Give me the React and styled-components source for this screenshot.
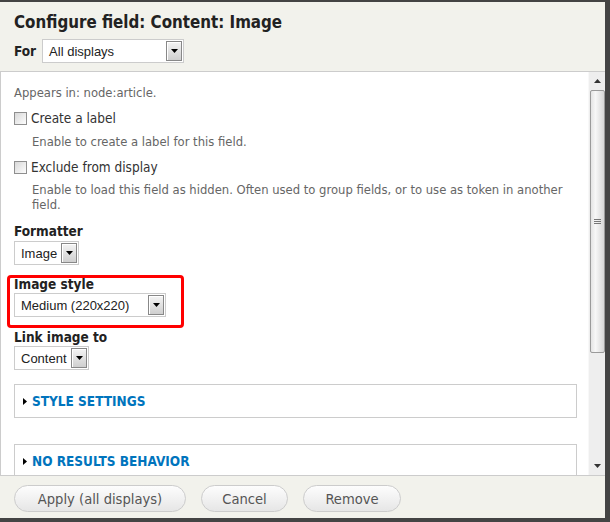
import React from 'react'
import styled, { createGlobalStyle } from 'styled-components'

const GlobalStyle = createGlobalStyle`
  html, body {
    margin: 0;
    padding: 0;
    background: #444;
  }
  body {
    font-family: "DejaVu Sans Condensed", "DejaVu Sans", sans-serif;
    font-stretch: condensed;
  }
`

const Page = styled.div`
  padding-top: 2px;
  width: 610px;
  height: 522px;
  box-sizing: border-box;
`

const Dialog = styled.div`
  width: 605px;
  height: 516px;
  background: #f2f2ec;
  display: flex;
  flex-direction: column;
`

const Header = styled.div`
  padding: 10px 14px 8px;
  border-bottom: 1px solid #ccc;
`

const Title = styled.h1`
  margin: 0;
  font-size: 16.8px;
  line-height: 20px;
  font-weight: bold;
  color: #222;
`

const ForRow = styled.div`
  display: flex;
  align-items: center;
  gap: 6px;
  margin-top: 7px;
`

const FieldLabel = styled.div`
  font-size: 13.5px;
  font-weight: bold;
  line-height: ${(p) => p.$lh || 16}px;
  color: #222;
  margin-top: ${(p) => p.$mt || 0}px;
`

const SelectBox = styled.div`
  width: ${(p) => p.$w}px;
  height: 24px;
  box-sizing: border-box;
  margin-top: ${(p) => p.$mt || 0}px;
  display: flex;
  align-items: center;
  border: 1px solid #ccc;
  background: #fff;
  font-family: "Liberation Sans", Arial, sans-serif;
  font-stretch: normal;
  font-size: 13px;
  color: #222;
`

const SelectValue = styled.span`
  flex: 1;
  padding-left: 6px;
  white-space: nowrap;
  overflow: hidden;
`

const ArrowBtn = styled.span`
  width: 16px;
  height: 20px;
  margin-right: 1px;
  box-sizing: border-box;
  border: 1px solid #888;
  box-shadow: inset 1px 1px 0 #fff;
  background: linear-gradient(#f4f4f4, #cfcfcf);
  display: flex;
  align-items: center;
  justify-content: center;
`

const Select = ({ w, mt, children }) => (
  <SelectBox $w={w} $mt={mt}>
    <SelectValue>{children}</SelectValue>
    <ArrowBtn>
      <svg width="7" height="4" viewBox="0 0 7 4">
        <path d="M0 0h7L3.5 4z" fill="#000" />
      </svg>
    </ArrowBtn>
  </SelectBox>
)

const Middle = styled.div`
  flex: 1;
  display: flex;
  min-height: 0;
`

const Content = styled.div`
  flex: 1;
  background: #fff;
  border-left: 1px solid #ccc;
  padding: 13px 11px 0 13px;
  overflow: hidden;
`

const Note = styled.div`
  font-size: 12.9px;
  line-height: 16px;
  color: #666;
`

const CheckRow = styled.label`
  display: flex;
  align-items: center;
  gap: 4px;
  height: 16px;
  margin-top: ${(p) => p.$mt}px;
  font-size: 13.5px;
  color: #333;
`

const Checkbox = styled.span`
  width: 13px;
  height: 13px;
  box-sizing: border-box;
  border: 1px solid #8f8f8f;
  background: linear-gradient(135deg, #d8d8d8, #fdfdfd);
`

const Desc = styled.div`
  margin: ${(p) => p.$mt}px 0 0 18px;
  font-size: 12.9px;
  line-height: 15px;
  color: #666;
`

const Highlight = styled.div`
  width: 177px;
  box-sizing: border-box;
  margin: 10px 0 0 -7px;
  padding: 0 4px 8px;
  border: 3px solid #f00;
  border-radius: 4px;
`

const Fieldset = styled.div`
  height: 34px;
  box-sizing: border-box;
  margin-top: ${(p) => p.$mt}px;
  border: 1px solid #ccc;
  padding-left: 8px;
  display: flex;
  align-items: center;
  gap: 5px;
  font-size: 13.5px;
  font-weight: bold;
  color: #0074bd;
  text-transform: uppercase;
`

const Legend = ({ mt, children }) => (
  <Fieldset $mt={mt}>
    <svg width="4" height="7" viewBox="0 0 4 7">
      <path d="M0 0l4 3.5L0 7z" fill="#000" />
    </svg>
    {children}
  </Fieldset>
)

const Scrollbar = styled.div`
  width: 17px;
  background: #eee;
  border-left: 1px solid #f8f8f8;
  display: flex;
  flex-direction: column;
  align-items: center;
  box-sizing: border-box;
`

const ScrollArrow = styled.div`
  height: 18px;
  display: flex;
  align-items: center;
  justify-content: center;
`

const Thumb = styled.div`
  width: 15px;
  height: 263px;
  box-sizing: border-box;
  border: 1px solid #9a9a9a;
  border-radius: 2px;
  background: linear-gradient(90deg, #e4e4e4, #f7f7f7 35%, #d6d6d6);
  display: flex;
  align-items: center;
  justify-content: center;
`

const Spacer = styled.div`
  flex: 1;
`

const Footer = styled.div`
  border-top: 1px solid #ccc;
  padding: 9px 14px 0;
  height: 43px;
  box-sizing: border-box;
  display: flex;
  align-items: flex-start;
  gap: 15px;
`

const Button = styled.button`
  height: 27px;
  width: ${(p) => p.$w}px;
  padding: 0;
  border: 1px solid #ccc;
  border-radius: 14px;
  background: linear-gradient(#fdfdfd, #e6e6e6);
  font-family: "DejaVu Sans Condensed", "DejaVu Sans", sans-serif;
  font-stretch: condensed;
  font-size: 14.6px;
  color: #555;
`

export default function App() {
  return (
    <Page>
      <GlobalStyle />
      <Dialog>
        <Header>
          <Title>Configure field: Content: Image</Title>
          <ForRow>
            <FieldLabel>For</FieldLabel>
            <Select w={142}>All displays</Select>
          </ForRow>
        </Header>
        <Middle>
          <Content>
            <Note>Appears in: node:article.</Note>
            <CheckRow $mt={9}>
              <Checkbox />
              Create a label
            </CheckRow>
            <Desc $mt={8}>Enable to create a label for this field.</Desc>
            <CheckRow $mt={10}>
              <Checkbox />
              Exclude from display
            </CheckRow>
            <Desc $mt={7}>
              Enable to load this field as hidden. Often used to group fields, or to use as token in another
              <br />
              field.
            </Desc>
            <FieldLabel $mt={11}>Formatter</FieldLabel>
            <Select w={65} mt={2}>Image</Select>
            <Highlight>
              <FieldLabel $lh={12}>Image style</FieldLabel>
              <Select w={152} mt={3}>Medium (220x220)</Select>
            </Highlight>
            <FieldLabel $mt={1}>Link image to</FieldLabel>
            <Select w={75} mt={1}>Content</Select>
            <Legend mt={14}>Style settings</Legend>
            <Legend mt={26}>No results behavior</Legend>
          </Content>
          <Scrollbar>
            <ScrollArrow>
              <svg width="7" height="4" viewBox="0 0 7 4">
                <path d="M3.5 0L7 4H0z" fill="#333" />
              </svg>
            </ScrollArrow>
            <Thumb>
              <svg width="7" height="6" viewBox="0 0 7 6">
                <path d="M0 .5h7M0 2.5h7M0 4.5h7" stroke="#777" strokeWidth="1" />
              </svg>
            </Thumb>
            <Spacer />
            <ScrollArrow>
              <svg width="7" height="4" viewBox="0 0 7 4">
                <path d="M0 0h7L3.5 4z" fill="#333" />
              </svg>
            </ScrollArrow>
          </Scrollbar>
        </Middle>
        <Footer>
          <Button $w={172}>Apply (all displays)</Button>
          <Button $w={87}>Cancel</Button>
          <Button $w={98}>Remove</Button>
        </Footer>
      </Dialog>
    </Page>
  )
}
